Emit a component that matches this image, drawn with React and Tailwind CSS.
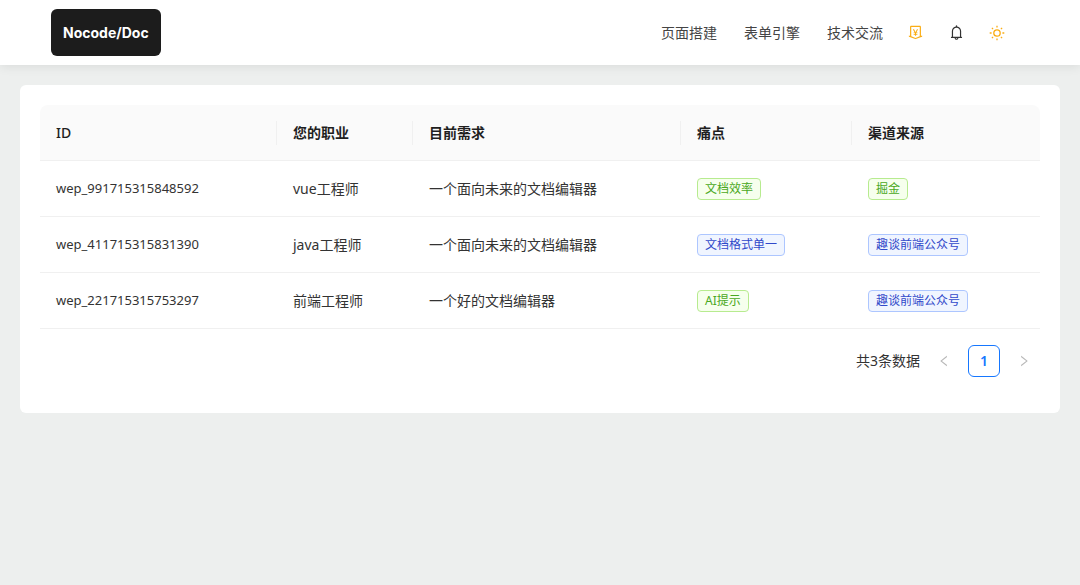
import React from "react";
import {
  AiOutlineBell,
  AiOutlineLeft,
  AiOutlineMoneyCollect,
  AiOutlineRight,
} from "react-icons/ai";

const links = ["页面搭建", "表单引擎", "技术交流"];

const columns = ["ID", "您的职业", "目前需求", "痛点", "渠道来源"];

const rows = [
  {
    id: "wep_991715315848592",
    job: "vue工程师",
    need: "一个面向未来的文档编辑器",
    pain: { text: "文档效率", tone: "green" },
    source: { text: "掘金", tone: "green" },
  },
  {
    id: "wep_411715315831390",
    job: "java工程师",
    need: "一个面向未来的文档编辑器",
    pain: { text: "文档格式单一", tone: "blue" },
    source: { text: "趣谈前端公众号", tone: "blue" },
  },
  {
    id: "wep_221715315753297",
    job: "前端工程师",
    need: "一个好的文档编辑器",
    pain: { text: "AI提示", tone: "green" },
    source: { text: "趣谈前端公众号", tone: "blue" },
  },
];

const tones = {
  green: "border-[#b7eb8f] bg-[#f6ffed] text-[#4aa822]",
  blue: "border-[#adc6ff] bg-[#f0f5ff] text-[#3049ca]",
};

function Tag({ text, tone }) {
  return (
    <span
      className={`inline-block rounded border px-[7px] text-xs leading-5 whitespace-nowrap ${tones[tone]}`}
    >
      {text}
    </span>
  );
}

function SunIcon() {
  return (
    <svg
      viewBox="0 0 16 16"
      className="size-4"
      fill="none"
      stroke="currentColor"
      strokeWidth="1.3"
      aria-hidden="true"
    >
      <circle cx="8" cy="8" r="3.2" />
      <path d="M8 .7v1.9M8 13.4v1.9M.7 8h1.9M13.4 8h1.9M2.9 2.9l1.2 1.2M11.9 11.9l1.2 1.2M2.9 13.1l1.2-1.2M11.9 4.1l1.2-1.2" />
    </svg>
  );
}

function Header() {
  return (
    <header className="flex h-[65px] items-center justify-between bg-white pr-[75px] pl-[51px] shadow-[0_2px_10px_rgba(0,0,0,0.08)]">
      <a
        href="#"
        className="flex h-[47px] items-center rounded-md bg-[#1c1c1c] px-3 font-['Inter','Noto_Sans_CJK_SC',sans-serif] text-sm font-bold text-white"
      >
        Nocode/Doc
      </a>
      <div className="flex items-center gap-6">
        <nav className="flex items-center gap-[27px]">
          {links.map((label) => (
            <a key={label} href="#" className="text-sm text-[#444]">
              {label}
            </a>
          ))}
        </nav>
        <button type="button" aria-label="打赏" className="text-[#faad14]">
          <AiOutlineMoneyCollect className="size-[17px]" />
        </button>
        <button type="button" aria-label="通知" className="text-[#333]">
          <AiOutlineBell className="size-[17px]" />
        </button>
        <button type="button" aria-label="主题" className="text-[#faad14]">
          <SunIcon />
        </button>
      </div>
    </header>
  );
}

function DataTable() {
  return (
    <table className="w-full table-fixed border-separate border-spacing-0 text-left text-sm text-[#333]">
      <colgroup>
        <col className="w-[23.7%]" />
        <col className="w-[13.6%]" />
        <col className="w-[26.8%]" />
        <col className="w-[17.1%]" />
        <col className="w-[18.8%]" />
      </colgroup>
      <thead className="text-[#1f1f1f]">
        <tr>
          {columns.map((name) => (
            <th
              key={name}
              scope="col"
              className="group h-14 border-b border-[#f0f0f0] bg-[#fafafa] p-0 font-semibold first:rounded-tl-lg first:font-medium last:rounded-tr-lg"
            >
              <div className="border-r border-[#f0f0f0] px-4 leading-6 group-last:border-r-0">
                {name}
              </div>
            </th>
          ))}
        </tr>
      </thead>
      <tbody>
        {rows.map((row) => (
          <tr key={row.id}>
            <td className="h-14 border-b border-[#f0f0f0] px-4 text-[13px]">{row.id}</td>
            <td className="h-14 border-b border-[#f0f0f0] px-4">{row.job}</td>
            <td className="h-14 border-b border-[#f0f0f0] px-4">{row.need}</td>
            <td className="h-14 border-b border-[#f0f0f0] px-4">
              <Tag {...row.pain} />
            </td>
            <td className="h-14 border-b border-[#f0f0f0] px-4">
              <Tag {...row.source} />
            </td>
          </tr>
        ))}
      </tbody>
    </table>
  );
}

function Pagination() {
  return (
    <nav aria-label="分页" className="my-4 flex items-center justify-end gap-2 text-sm">
      <span className="text-[#333]">共3条数据</span>
      <button
        type="button"
        disabled
        aria-label="上一页"
        className="grid size-8 place-items-center text-[#b8b8b8]"
      >
        <AiOutlineLeft className="size-[14px]" />
      </button>
      <button
        type="button"
        aria-current="page"
        className="size-8 rounded-md border border-[#1677ff] bg-white text-sm font-semibold text-[#1677ff]"
      >
        1
      </button>
      <button
        type="button"
        disabled
        aria-label="下一页"
        className="grid size-8 place-items-center text-[#b8b8b8]"
      >
        <AiOutlineRight className="size-[14px]" />
      </button>
    </nav>
  );
}

export default function App() {
  return (
    <div className="min-h-screen bg-[#edefee] font-['Noto_Sans','Noto_Sans_CJK_SC',sans-serif]">
      <Header />
      <main className="m-5 rounded-md bg-white p-5">
        <DataTable />
        <Pagination />
      </main>
    </div>
  );
}
